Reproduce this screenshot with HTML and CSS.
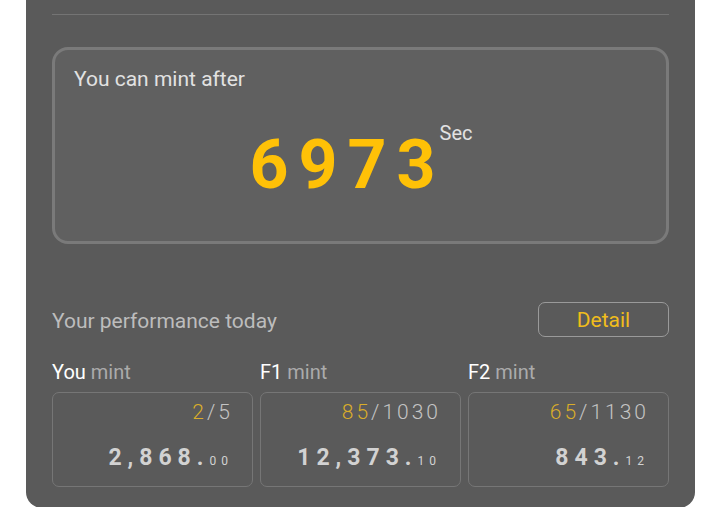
FILE: index.html
```html
<!DOCTYPE html>
<html lang="en">

<head>
    <meta charset="UTF-8">
    <meta name="viewport" content="width=device-width, initial-scale=1.0">
    <title>Mint</title>
    <link rel="stylesheet" href="styles.css">
</head>

<body>
    <div class="card">
        <div class="divider"></div>

        <div class="countdown">
            <div class="countdown-title">You can mint after</div>
            <div class="timer">
                <span class="timer-value">697<span class="last">3</span></span>
                <span class="timer-unit">Sec</span>
            </div>
        </div>

        <div class="perf-head">
            <div class="perf-title">Your performance today</div>
            <div class="detail-btn">Detail</div>
        </div>

        <div class="stats">
            <div class="stat">
                <div class="stat-label"><span class="who">You</span> mint</div>
                <div class="stat-box">
                    <div class="ratio"><span class="done">2</span>/5</div>
                    <div class="amount">2,868.<span class="cents">00</span></div>
                </div>
            </div>
            <div class="stat">
                <div class="stat-label"><span class="who">F1</span> mint</div>
                <div class="stat-box">
                    <div class="ratio"><span class="done">85</span>/1030</div>
                    <div class="amount">12,373.<span class="cents">10</span></div>
                </div>
            </div>
            <div class="stat">
                <div class="stat-label"><span class="who">F2</span> mint</div>
                <div class="stat-box">
                    <div class="ratio"><span class="done">65</span>/1130</div>
                    <div class="amount">843.<span class="cents">12</span></div>
                </div>
            </div>
        </div>
    </div>
</body>

</html>
```

FILE: styles.css
```css
body {
    margin: 0;
    background-color: #ffffff;
    font-family: Roboto, "Liberation Sans", sans-serif;
    overflow: hidden;
}

.card {
    width: 617px;
    margin-left: 26px;
    padding: 14px 26px 21px;
    background-color: #5a5a5a;
    border-radius: 0 0 16px 16px;
}

.divider {
    height: 1px;
    background-color: #747474;
}

.countdown {
    margin-top: 32px;
    height: 197px;
    box-sizing: border-box;
    border: 3px solid #7a7a7a;
    border-radius: 16px;
    background-color: #606060;
    padding: 17px 20px 0 19px;
}

.countdown-title {
    font-size: 21px;
    line-height: 24px;
    color: #e2e2e2;
}

.timer {
    display: flex;
    justify-content: center;
    align-items: flex-start;
    gap: 4px;
    margin-top: 40px;
    padding-left: 2px;
}

.timer-value {
    font-size: 68px;
    line-height: 68px;
    font-weight: bold;
    letter-spacing: 10px;
    color: #ffc107;
}

.timer-value .last {
    letter-spacing: 0;
}

.timer-unit {
    font-size: 20px;
    line-height: 22px;
    color: #e2e2e2;
    margin-top: -9px;
}

.perf-head {
    display: flex;
    justify-content: space-between;
    align-items: center;
    margin-top: 58px;
}

.perf-title {
    font-size: 21px;
    color: #bdbdbd;
    padding-top: 3px;
}

.detail-btn {
    width: 131px;
    height: 35px;
    box-sizing: border-box;
    border: 1px solid #9a9a9a;
    border-radius: 7px;
    display: flex;
    justify-content: center;
    align-items: center;
    font-size: 21px;
    color: #f0bd1c;
}

.stats {
    display: grid;
    grid-template-columns: repeat(3, 1fr);
    gap: 7px;
    margin-top: 24px;
}

.stat-label {
    font-size: 20px;
    line-height: 22px;
    color: #ababab;
    margin-bottom: 9px;
}

.stat-label .who {
    color: #ffffff;
}

.stat-box {
    height: 95px;
    box-sizing: border-box;
    border: 1px solid #767676;
    border-radius: 7px;
    padding: 6px 19px 0 10px;
    text-align: right;
}

.ratio {
    font-size: 21px;
    line-height: 26px;
    font-weight: 300;
    letter-spacing: 3px;
    color: #c4c4c4;
}

.ratio .done {
    color: #d9ad2a;
}

.amount {
    margin-top: 19px;
    font-size: 23px;
    line-height: 27px;
    font-weight: bold;
    letter-spacing: 6px;
    color: #d2d2d2;
}

.cents {
    font-size: 12px;
    font-weight: normal;
    letter-spacing: 5px;
}
```
